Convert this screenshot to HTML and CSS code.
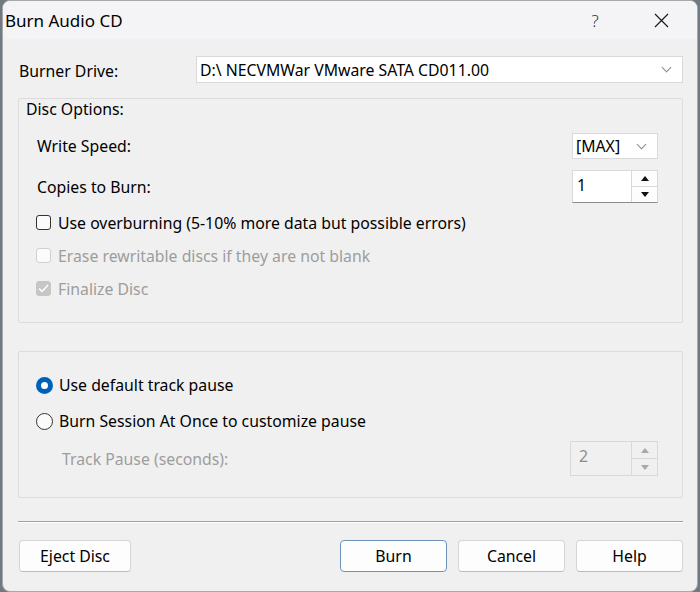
FILE: index.html
```html
<!DOCTYPE html>
<html lang="en">
<head>
  <meta charset="UTF-8">
  <title>Burn Audio CD</title>
  <link rel="stylesheet" href="styles.css">
</head>
<body>

<div class="dialog">
  <!-- Title bar -->
  <div class="titlebar">
    <span class="title">Burn Audio CD</span>
    <span class="title-help">?</span>
    <span class="title-close">
      <svg width="15" height="15" viewBox="0 0 15 15">
        <path d="M1 1 L14 14 M14 1 L1 14" stroke="#1a1a1a" stroke-width="1.2" fill="none"/>
      </svg>
    </span>
  </div>

  <div class="content">
    <!-- Drive selection -->
    <div class="drive-row">
      <span class="label">Burner Drive:</span>
      <div class="combo combo-wide">
        <span>D:\ NECVMWar VMware SATA CD011.00</span>
        <span class="chevron"></span>
      </div>
    </div>

    <!-- Disc options -->
    <div class="group group-disc">
      <div class="group-title">Disc Options:</div>

      <div class="opt-row row-speed">
        <span class="label">Write Speed:</span>
        <div class="combo combo-small">
          <span>[MAX]</span>
          <span class="chevron"></span>
        </div>
      </div>

      <div class="opt-row row-copies">
        <span class="label">Copies to Burn:</span>
        <div class="spin">
          <span class="spin-value">1</span>
          <div class="spin-buttons">
            <span class="spin-btn"><span class="tri-up"></span></span>
            <span class="spin-btn"><span class="tri-down"></span></span>
          </div>
        </div>
      </div>

      <label class="check-row">
        <span class="checkbox"></span>
        <span>Use overburning (5-10% more data but possible errors)</span>
      </label>
      <label class="check-row disabled">
        <span class="checkbox"></span>
        <span>Erase rewritable discs if they are not blank</span>
      </label>
      <label class="check-row disabled">
        <span class="checkbox checked">
          <svg width="11" height="9" viewBox="0 0 11 9">
            <path d="M1 4.5 L4 7.5 L10 1" stroke="#fff" stroke-width="1.5" fill="none"/>
          </svg>
        </span>
        <span>Finalize Disc</span>
      </label>
    </div>

    <!-- Track pause -->
    <div class="group group-pause">
      <label class="radio-row">
        <span class="radio checked"></span>
        <span>Use default track pause</span>
      </label>
      <label class="radio-row">
        <span class="radio"></span>
        <span>Burn Session At Once to customize pause</span>
      </label>
      <div class="opt-row row-pause disabled">
        <span class="label">Track Pause (seconds):</span>
        <div class="spin spin-disabled">
          <span class="spin-value">2</span>
          <div class="spin-buttons">
            <span class="spin-btn"><span class="tri-up"></span></span>
            <span class="spin-btn"><span class="tri-down"></span></span>
          </div>
        </div>
      </div>
    </div>

    <div class="separator"></div>

    <!-- Dialog buttons -->
    <div class="button-row">
      <button class="btn btn-eject" type="button">Eject Disc</button>
      <div class="button-group">
        <button class="btn btn-default" type="button">Burn</button>
        <button class="btn" type="button">Cancel</button>
        <button class="btn" type="button">Help</button>
      </div>
    </div>
  </div>
</div>

</body>
</html>
```

FILE: styles.css
```css
* {
  box-sizing: border-box;
  margin: 0;
  padding: 0;
}
html, body {
  height: 100%;
  background: #6f7a83;
  font-family: 'Noto Sans', 'Open Sans', sans-serif;
  font-size: 15.8px;
  color: #000;
}

/* Window frame */
.dialog {
  width: 696px;
  height: 592px;
  margin-left: 2px;
  background: #f0f0f0;
  border: 1px solid #a8a8a8;
  border-radius: 8px;
  overflow: hidden;
  display: flex;
  flex-direction: column;
}

.titlebar {
  height: 38px;
  flex: none;
  display: flex;
  align-items: center;
  background: #f4f4f6;
}
.title {
  font-size: 17px;
  padding-left: 2px;
  flex: 1;
}
.title-help {
  width: 40px;
  text-align: center;
  font-size: 17px;
  font-weight: 300;
  color: #333;
  margin-right: 26px;
}
.title-close {
  width: 40px;
  display: flex;
  justify-content: center;
  margin-right: 16px;
}

.content {
  padding: 0 14px 0 15px;
  display: flex;
  flex-direction: column;
}

.label {
  white-space: nowrap;
}

/* Drop-down boxes */
.drive-row {
  margin-top: 17px;
  height: 27px;
  display: flex;
  align-items: center;
}
.drive-row .label {
  width: 178px;
  padding-left: 1px;
  padding-top: 2px;
}
.combo {
  height: 27px;
  background: #fff;
  border: 1px solid #d9d9d9;
  display: flex;
  align-items: center;
  justify-content: space-between;
  padding: 0 12px 0 3px;
}
.combo-wide {
  flex: 1;
}
.combo-small {
  width: 86px;
  height: 26px;
}
.chevron {
  width: 7px;
  height: 7px;
  border-right: 1px solid #8a8a8a;
  border-bottom: 1px solid #8a8a8a;
  transform: rotate(45deg);
  margin-top: -4px;
}

/* Group boxes */
.group {
  border: 1px solid #dcdcdc;
  border-radius: 2px;
  display: flex;
  flex-direction: column;
  padding: 0 24px 0 18px;
}
.group-disc {
  margin-top: 15px;
  height: 225px;
}
.group-title {
  height: 22px;
  line-height: 22px;
  margin-left: -11px;
  margin-top: -1px;
}
.group-pause {
  margin-top: 28px;
  height: 147px;
  padding-top: 15px;
}

.opt-row {
  display: flex;
  align-items: center;
  justify-content: space-between;
}
.row-speed {
  margin-top: 12px;
  height: 28px;
}
.row-copies {
  margin-top: 10px;
  height: 33px;
}
.row-pause {
  margin-top: 2px;
  height: 35px;
  padding-left: 25px;
}

/* Spin boxes */
.spin {
  width: 86px;
  height: 33px;
  display: flex;
  background: #fff;
  border: 1px solid #d9d9d9;
  border-bottom-color: #8c8c8c;
}
.spin-value {
  flex: 1;
  padding: 3px 0 0 4px;
}
.spin-buttons {
  width: 26px;
  display: flex;
  flex-direction: column;
  border-left: 1px solid #d9d9d9;
}
.spin-btn {
  flex: 1;
  display: flex;
  align-items: center;
  justify-content: center;
  background: #fdfdfd;
}
.spin-btn + .spin-btn {
  border-top: 1px solid #d9d9d9;
}
.tri-up, .tri-down {
  width: 0;
  height: 0;
  border-left: 4px solid transparent;
  border-right: 4px solid transparent;
}
.tri-up {
  border-bottom: 5px solid #111;
}
.tri-down {
  border-top: 5px solid #111;
}
.spin-disabled {
  height: 35px;
  width: 88px;
  border-bottom-color: #d9d9d9;
  background: #f0f0f0;
}
.spin-disabled .spin-value {
  color: #8c8c8c;
  padding-left: 8px;
}
.spin-disabled .spin-btn {
  background: #f0f0f0;
}
.spin-disabled .tri-up {
  border-bottom-color: #a8a8a8;
}
.spin-disabled .tri-down {
  border-top-color: #a8a8a8;
}

/* Check boxes and radio buttons */
.check-row, .radio-row {
  display: flex;
  align-items: center;
  gap: 7px;
  height: 33px;
  white-space: nowrap;
  margin-left: -1px;
}
.check-row:first-of-type {
  margin-top: 3px;
}
.checkbox {
  width: 15px;
  height: 15px;
  border: 1px solid #333;
  border-radius: 3px;
  background: #fbfbfb;
  display: flex;
  align-items: center;
  justify-content: center;
}
.disabled {
  color: #9d9d9d;
}
.disabled .checkbox {
  border-color: #cfcfcf;
}
.disabled .checkbox.checked {
  background: #c6c6c6;
  border-color: #c6c6c6;
}

.radio-row {
  height: 36px;
  gap: 6px;
}
.radio {
  width: 17px;
  height: 17px;
  border: 1px solid #333;
  border-radius: 50%;
  background: #fbfbfb;
}
.radio.checked {
  background: #fff;
  border: 5px solid #0060b8;
}

.separator {
  margin-top: 23px;
  height: 2px;
  border-top: 1px solid #a0a0a0;
  border-bottom: 1px solid #fff;
}

/* Push buttons */
.button-row {
  margin-top: 17px;
  display: flex;
  justify-content: space-between;
  padding-left: 1px;
}
.button-group {
  display: flex;
  gap: 11px;
}
.btn {
  height: 32px;
  width: 107px;
  font-family: inherit;
  font-size: 15.8px;
  background: #fdfdfd;
  border: 1px solid #d5d5d5;
  border-bottom-color: #bcbcbc;
  border-radius: 4px;
}
.btn-eject {
  width: 112px;
}
.btn-default {
  border: 1px solid #6d93bd;
}
```
